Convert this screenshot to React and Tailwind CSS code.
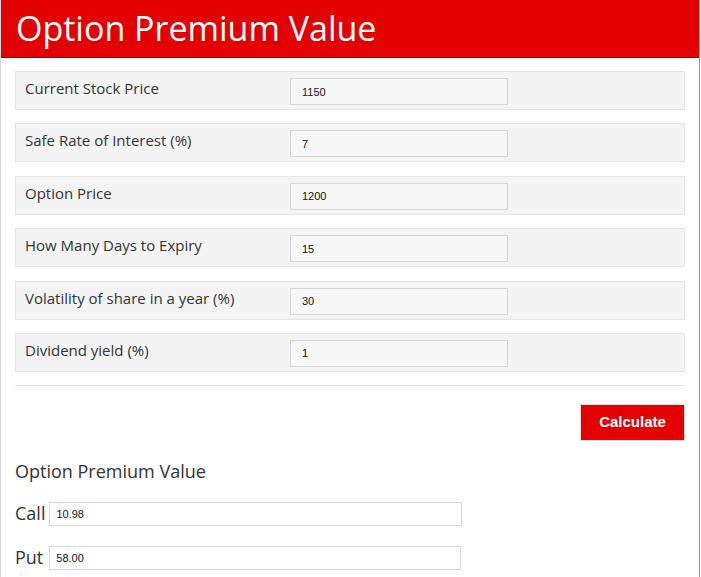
const fields = [
  { label: 'Current Stock Price', value: '1150' },
  { label: 'Safe Rate of Interest (%)', value: '7' },
  { label: 'Option Price', value: '1200' },
  { label: 'How Many Days to Expiry', value: '15' },
  { label: 'Volatility of share in a year (%)', value: '30' },
  { label: 'Dividend yield (%)', value: '1' },
]

export default function App() {
  return (
    <div className="w-[701px] min-h-[577px] bg-white font-['Open_Sans',sans-serif]">
      <div className="w-[700px] min-h-[577px] border-l border-r border-l-[#d8d8d8] border-r-[#9a9a9a] flex flex-col">
        {/* Header */}
        <div className="h-[58px] bg-[#e30000] border-b border-[#8c0000] flex items-center pl-[15px]">
          <h1 className="text-white text-[34px] leading-none -mt-[2px]">Option Premium Value</h1>
        </div>

        <div className="px-[14px]">
          {/* Input rows */}
          <div className="mt-[13px] flex flex-col gap-[13.4px]">
            {fields.map((f, i) => (
              <div key={i} className="h-[39px] bg-[#f4f4f4] border border-[#e3e3e3] flex items-start">
                <div className="w-[274px] pl-[9px] pt-[6px] text-[15px] leading-[20px] text-[#333]">{f.label}</div>
                <input
                  readOnly
                  value={f.value}
                  className="mt-[6px] w-[218px] h-[27px] bg-[#f7f7f7] border border-[#d6d6d6] px-[11px] text-[11px] text-[#111] font-['Liberation_Sans',Arial,sans-serif] outline-none"
                />
              </div>
            ))}
          </div>

          <div className="mt-[13px] border-t border-[#e6e6e6]" />

          <div className="mt-[18px] flex justify-end">
            <button className="w-[105px] h-[37px] bg-[#e30000] border border-[#dcdcdc] text-white font-bold text-[15px] font-['Liberation_Sans',Arial,sans-serif]">
              Calculate
            </button>
          </div>

          <h2 className="mt-[18px] text-[18px] leading-[24px] text-[#333]">Option Premium Value</h2>

          <div className="mt-[19px] flex items-center gap-[4px]">
            <span className="text-[18px] leading-[22px] -mt-[2px] text-[#333]">Call</span>
            <input
              readOnly
              value="10.98"
              className="w-[413px] h-[24px] border border-[#d6d6d6] bg-white px-[6px] text-[11px] text-[#111] font-['Liberation_Sans',Arial,sans-serif] outline-none"
            />
          </div>

          <div className="mt-[20px] flex items-center gap-[6px]">
            <span className="text-[18px] leading-[22px] -mt-[2px] text-[#333]">Put</span>
            <input
              readOnly
              value="58.00"
              className="w-[412px] h-[24px] border border-[#d6d6d6] bg-white px-[6px] text-[11px] text-[#111] font-['Liberation_Sans',Arial,sans-serif] outline-none"
            />
          </div>
        </div>
      </div>
    </div>
  )
}
